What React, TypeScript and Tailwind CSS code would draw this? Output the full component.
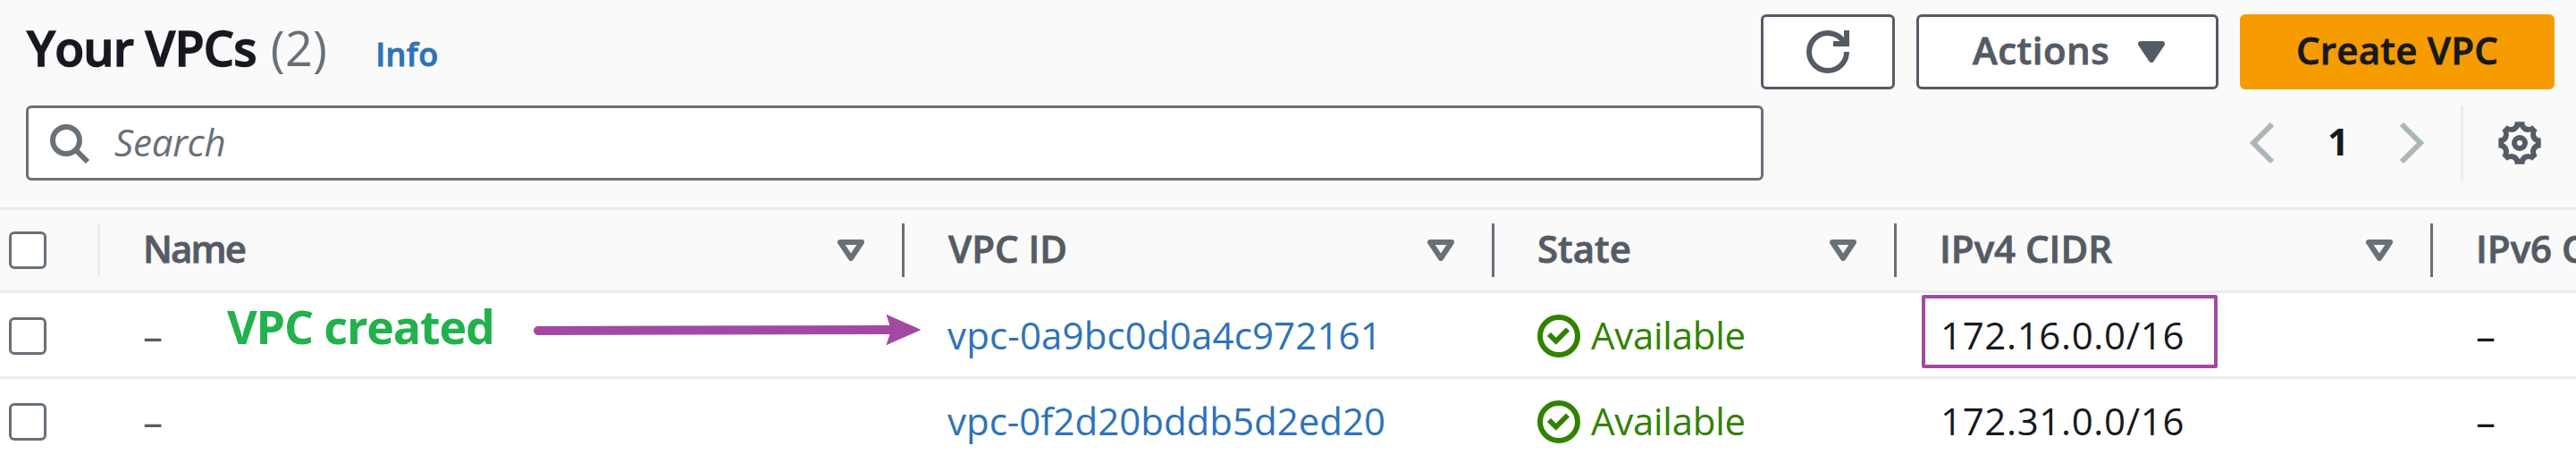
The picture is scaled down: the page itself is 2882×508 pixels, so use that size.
import type { ReactNode } from "react";

const GEAR_PATH = (() => {
  const at = (deg: number, r: number) => {
    const a = (deg * Math.PI) / 180;
    return `${(8 + r * Math.cos(a)).toFixed(3)} ${(8 + r * Math.sin(a)).toFixed(3)}`;
  };
  let outer = "";
  let inner = "";
  for (let i = 0; i < 8; i++) {
    const deg = i * 45;
    const half = i % 2 ? 9.5 : 13;
    const nextHalf = i % 2 ? 13 : 9.5;
    outer += `${i ? "L" : "M"}${at(deg - half, 8.1)}L${at(deg + half, 8.1)}L${at(deg + half + 1, 7.5)}Q${at(deg + 22.5, 6)} ${at(deg + 45 - nextHalf - 1, 7.5)}`;
    inner += `${i ? "" : `M${at(0, 6.1)}`}Q${at(deg + 22.5, 3.7)} ${at(deg + 45, i % 2 ? 6.1 : 5.9)}`;
  }
  return `${outer}Z${inner}Z`;
})();

function GearIcon() {
  return (
    <svg viewBox="0 0 16 16" className="size-12 text-[#545b64]">
      <path d={GEAR_PATH} fill="currentColor" fillRule="evenodd" />
      <circle cx="8" cy="8" r="2" fill="none" stroke="currentColor" strokeWidth="2" />
    </svg>
  );
}

function RefreshIcon() {
  return (
    <svg viewBox="0 0 16 16" fill="none" stroke="currentColor" strokeWidth="2" className="size-12">
      <path d="M15 8c0 3.87-3.13 7-7 7s-7-3.13-7-7 3.13-7 7-7c2.79 0 5.2 1.63 6.33 4" />
      <path d="M10 5h5V0" />
    </svg>
  );
}

function SearchIcon() {
  return (
    <svg viewBox="0 0 16 16" fill="none" stroke="currentColor" strokeWidth="2" className="size-12 shrink-0">
      <circle cx="7" cy="7" r="5" />
      <path d="M10.5 10.5 15 15" />
    </svg>
  );
}

function ChevronIcon({ flip = false }: { flip?: boolean }) {
  return (
    <svg viewBox="0 0 28 48" fill="none" stroke="#aab7b8" strokeWidth="6" className={flip ? "h-12 w-7 -scale-x-100" : "h-12 w-7"}>
      <path d="M25 3 4 24l21 21" />
    </svg>
  );
}

function Triangle({ filled = false }: { filled?: boolean }) {
  return (
    <svg
      viewBox="0 0 30 24"
      fill={filled ? "currentColor" : "none"}
      stroke="currentColor"
      strokeWidth="6"
      strokeLinejoin="round"
      className="h-6 w-[30px] shrink-0"
    >
      <path d="M3 3h24L15 21z" />
    </svg>
  );
}

function StatusIcon() {
  return (
    <svg viewBox="0 0 16 16" fill="none" stroke="currentColor" strokeWidth="2" className="size-12 shrink-0">
      <circle cx="8" cy="8" r="7" />
      <path d="m4.33 7.3 2.6 2.6 4.4-4.4" strokeWidth="1.9" />
    </svg>
  );
}

function Checkbox() {
  return <span className="ml-2.5 block size-[42px] rounded-md border-[3px] border-[#687078] bg-white" />;
}

const GRID = "grid grid-cols-[112px_900px_660px_450px_600px_160px]";

function HeaderCell({ label, className = "", last = false }: { label: string; className?: string; last?: boolean }) {
  return (
    <div className="flex items-center justify-between pl-12 text-[#687078]">
      <span className={`relative -top-0.5 font-semibold whitespace-nowrap text-[#545b64] [-webkit-text-stroke:0.8px_#545b64] ${className}`}>{label}</span>
      {!last && (
        <span className="flex items-center gap-[42px]">
          <Triangle />
          <span className="h-[60px] w-[3px] bg-[#687078]" />
        </span>
      )}
    </div>
  );
}

function Cell({ children, className = "" }: { children: ReactNode; className?: string }) {
  return <div className={`flex items-center pl-12 whitespace-nowrap ${className}`}>{children}</div>;
}

const VPCS = [
  { id: "vpc-0a9bc0d0a4c972161", cidr: "172.16.0.0/16", spacing: "tracking-[0.15px]" },
  { id: "vpc-0f2d20bddb5d2ed20", cidr: "172.31.0.0/16", spacing: "tracking-normal" },
];

export default function App() {
  return (
    <div className="relative h-[508px] w-[2882px] overflow-hidden bg-white font-['Open_Sans','Noto_Sans',sans-serif] text-[42px] leading-[60px] text-[#16191f]">
      <header className="h-[235px] border-b-[3px] border-[#eaeded] bg-[#fafafa] pt-4">
        <div className="flex justify-between pr-6 pl-[30px]">
          <h1 className="flex h-[72px] items-baseline pt-px text-[54px] leading-[72px] whitespace-nowrap">
            <span className="font-semibold tracking-[-0.8px] [-webkit-text-stroke:1.4px_#16191f]">Your VPCs</span>
            <span className="ml-4 tracking-[0.25px] text-[#687078]">(2)</span>
            <a className="ml-[54px] text-[36px] font-semibold tracking-[0.4px] text-[#2e73b8] [-webkit-text-stroke:0.9px_#2e73b8]">Info</a>
          </h1>
          <div className="flex gap-6 font-semibold">
            <button className="flex h-[84px] w-[150px] items-center justify-center rounded-md border-[3px] border-[#545b64] bg-white text-[#545b64]">
              <RefreshIcon />
            </button>
            <button className="flex h-[84px] w-[338px] items-center justify-between rounded-md border-[3px] border-[#545b64] bg-white pr-[57px] pl-[60px] text-[#545b64]">
              <span className="relative -top-0.5 tracking-[0.5px] [-webkit-text-stroke:0.8px_#545b64]">Actions</span>
              <Triangle filled />
            </button>
            <button className="flex h-[84px] w-[352px] items-center rounded-md bg-[#f69b00] pl-[63px] whitespace-nowrap">
              <span className="relative -top-0.5 tracking-[0.25px] [-webkit-text-stroke:0.8px_#16191f]">Create VPC</span>
            </button>
          </div>
        </div>
        <div className="mt-[18px] flex items-center justify-between pr-[39px] pl-[29px]">
          <div className="flex h-[84px] w-[1944px] items-center rounded-md border-[3px] border-[#687078] bg-white pl-[21px] text-[#687078]">
            <SearchIcon />
            <span className="relative -top-px ml-[27px] tracking-[-0.2px] italic">Search</span>
          </div>
          <div className="flex items-center">
            <ChevronIcon />
            <span className="relative -top-0.5 ml-[59px] w-[80px] font-bold">1</span>
            <ChevronIcon flip />
            <span className="mr-[39px] ml-[41px] h-[84px] w-[3px] bg-[#eaeded]" />
            <GearIcon />
          </div>
        </div>
      </header>

      <div className={`${GRID} h-[93px] border-b-[3px] border-[#eaeded] bg-[#fafafa]`}>
        <div className="flex items-center justify-between">
          <Checkbox />
          <span className="h-[60px] w-[3px] bg-[#eaeded]" />
        </div>
        <HeaderCell label="Name" className="tracking-[-1.9px]" />
        <HeaderCell label="VPC ID" className="left-px" />
        <HeaderCell label="State" />
        <HeaderCell label="IPv4 CIDR" />
        <HeaderCell label="IPv6 CIDR" last />
      </div>

      {VPCS.map((vpc) => (
        <div key={vpc.id} className={`${GRID} h-24 border-b-[3px] border-[#eaeded]`}>
          <div className="flex items-center pt-[3px]">
            <Checkbox />
          </div>
          <Cell className="text-[44px] text-[#545b64]">–</Cell>
          <Cell className={`text-[#2e73b8] ${vpc.spacing}`}>{vpc.id}</Cell>
          <Cell className="text-[#318200]">
            <span className="mt-[3px] flex">
              <StatusIcon />
            </span>
            <span className="ml-3 tracking-[-0.28px]">Available</span>
          </Cell>
          <Cell className="pl-[49px] tracking-[0.65px]">{vpc.cidr}</Cell>
          <Cell className="text-[44px]">–</Cell>
        </div>
      ))}

      <span className="absolute top-[335px] left-[254px] text-[52px] font-bold tracking-[-1.19px] whitespace-nowrap text-[#22b14c]">VPC created</span>
      <svg viewBox="0 0 440 40" className="absolute top-[350px] left-[594px] h-10 w-[440px]">
        <path d="M8 20 404 19" stroke="#a349a4" strokeWidth="10" strokeLinecap="round" />
        <path d="M397.500 1.700 436.500 19 397.500 36.300 403 19z" fill="#a349a4" />
      </svg>
      <div className="absolute top-[330px] left-[2150px] h-[82px] w-[331px] rounded-[2px] border-4 border-[#a349a4]" />
    </div>
  );
}
